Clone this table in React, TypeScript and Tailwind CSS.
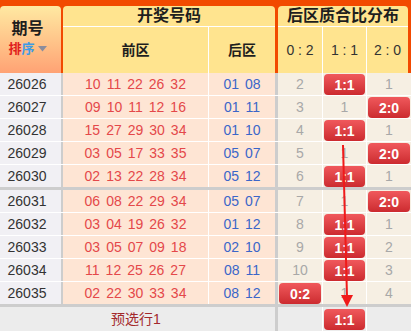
import React from "react";

type Row = {
  issue: string;
  front: string[];
  back: string[];
  // miss counts or badge label for 0:2, 1:1, 2:0
  dist: [string | number, string | number, string | number];
};

const ROWS: Row[] = [
  { issue: "26026", front: ["10", "11", "22", "26", "32"], back: ["01", "08"], dist: [2, "1:1", 1] },
  { issue: "26027", front: ["09", "10", "11", "12", "16"], back: ["01", "11"], dist: [3, 1, "2:0"] },
  { issue: "26028", front: ["15", "27", "29", "30", "34"], back: ["01", "10"], dist: [4, "1:1", 1] },
  { issue: "26029", front: ["03", "05", "17", "33", "35"], back: ["05", "07"], dist: [5, 1, "2:0"] },
  { issue: "26030", front: ["02", "13", "22", "28", "34"], back: ["05", "12"], dist: [6, "1:1", 1] },
  { issue: "26031", front: ["06", "08", "22", "29", "34"], back: ["05", "07"], dist: [7, 1, "2:0"] },
  { issue: "26032", front: ["03", "04", "19", "26", "32"], back: ["01", "12"], dist: [8, "1:1", 1] },
  { issue: "26033", front: ["03", "05", "07", "09", "18"], back: ["02", "10"], dist: [9, "1:1", 2] },
  { issue: "26034", front: ["11", "12", "25", "26", "27"], back: ["08", "11"], dist: [10, "1:1", 3] },
  { issue: "26035", front: ["02", "22", "30", "33", "34"], back: ["08", "12"], dist: ["0:2", 1, 4] },
];

function Badge({ label }: { label: string }) {
  return (
    <div className="flex h-[21px] w-full items-center justify-center rounded-[4px] bg-linear-to-b from-[#f0585c] to-[#cc2a2f] text-[14px] font-bold leading-none text-white">
      {label}
    </div>
  );
}

function DistCell({ value, className }: { value: string | number; className: string }) {
  const badge = typeof value === "string";
  return (
    <div className={`flex h-full items-start justify-center px-[1px] pt-[1px] ${className}`}>
      {badge ? (
        <Badge label={value} />
      ) : (
        <span className="text-[14px] leading-[21px] text-[#a8a8a8]">{value}</span>
      )}
    </div>
  );
}

function DataRow({ row, last }: { row: Row; last: boolean }) {
  const bottom = last ? "h-[25px] border-b-[3px] border-[#cdcdcd]" : "h-[23px] border-b border-white";
  return (
    <div className={`flex ${bottom}`}>
      <div className="flex w-[63px] items-center justify-center border-r-2 border-[#cdcdcd] bg-[#f1f0f4] pr-[7px] text-[14px] text-[#333]">
        {row.issue}
      </div>
      <div className="flex w-[146px] items-center justify-center gap-[6px] border-r border-white bg-[#fee5d4] text-[14px] text-[#e4484a]">
        {row.front.map((n, i) => (
          <span key={i}>{n}</span>
        ))}
      </div>
      <div className="flex w-[69px] items-center justify-center gap-[6px] border-r-[3px] border-[#cdcdcd] bg-[#fee5d4] text-[14px] text-[#3b66c9]">
        {row.back.map((n, i) => (
          <span key={i}>{n}</span>
        ))}
      </div>
      <DistCell value={row.dist[0]} className="w-[45px] border-r border-white bg-[#f6efe3]" />
      <DistCell value={row.dist[1]} className="w-[44px] border-r border-white bg-[#f6efe3]" />
      <DistCell value={row.dist[2]} className="flex-1 bg-[#f6efe3]" />
    </div>
  );
}

export default function App() {
  return (
    <div className="relative h-[331px] w-[411px] overflow-hidden bg-white font-['Liberation_Sans','Noto_Sans_CJK_SC',sans-serif]">
      {/* header */}
      <div className="flex h-[73px] bg-[#f24a00] pt-[6px] text-[#1e1e1e]">
        <div className="flex w-[61px] flex-col items-center rounded-t-[4px] bg-linear-to-b from-[#ffe9a2] to-[#ffa274] pr-[6px] pt-[14px]">
          <div className="text-[16px] font-bold leading-[18px]">期号</div>
          <div className="mt-[3px] flex items-center text-[13px] font-bold leading-[15px]">
            <span className="text-[#e0201c]">排</span>
            <span className="text-[#3d9be6]">序</span>
            <svg width="9" height="6" viewBox="0 0 9 6" className="ml-[3px]">
              <path d="M0 0 H9 L4.5 5.5 Z" fill="#8c8c9c" />
            </svg>
          </div>
        </div>
        <div className="ml-[2px] flex w-[212px] flex-col rounded-t-[4px] bg-[#ffe48f]">
          <div className="flex h-[21px] items-center justify-center border-b border-white text-[16px] font-bold">
            开奖号码
          </div>
          <div className="flex flex-1">
            <div className="flex w-[146px] items-center justify-center border-r border-white text-[14px] font-bold">
              前区
            </div>
            <div className="flex flex-1 items-center justify-center text-[14px] font-bold">后区</div>
          </div>
        </div>
        <div className="ml-[3px] flex w-[130px] flex-col rounded-t-[4px] bg-[#ffe48f]">
          <div className="flex h-[21px] items-center justify-center border-b border-white text-[16px] font-bold">
            后区质合比分布
          </div>
          <div className="flex flex-1 text-[14px] text-[#333]">
            <div className="flex w-[45px] items-center justify-center border-r border-white">0 : 2</div>
            <div className="flex w-[44px] items-center justify-center border-r border-white">1 : 1</div>
            <div className="flex flex-1 items-center justify-center">2 : 0</div>
          </div>
        </div>
      </div>

      {/* body */}
      {ROWS.map((row, i) => (
        <DataRow key={row.issue} row={row} last={i === 4 || i === 9} />
      ))}

      {/* footer */}
      <div className="flex h-[24px] bg-[#ececec]">
        <div className="flex w-[278px] border-r-[3px] border-[#cdcdcd]">
          <div className="ml-[63px] w-[146px] text-center text-[14px] leading-[24px] text-[#a3292b]">预选行1</div>
        </div>
        <div className="w-[45px] border-r border-white" />
        <div className="w-[44px] border-r border-white px-[1px] pt-[2px]">
          <Badge label="1:1" />
        </div>
        <div className="flex-1" />
      </div>

      {/* trend arrow */}
      <svg className="pointer-events-none absolute left-0 top-0" width="411" height="331" viewBox="0 0 411 331">
        <line x1="343" y1="145" x2="347" y2="297" stroke="#f01a1a" strokeWidth="2" />
        <polygon points="341,295 353,295 347,307" fill="#f01a1a" />
      </svg>
    </div>
  );
}
